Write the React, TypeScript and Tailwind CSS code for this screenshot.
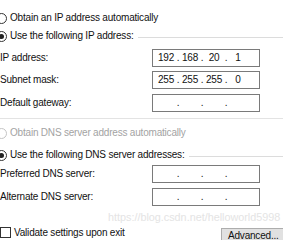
import { Fragment } from "react";

function Radio({ checked, disabled }: { checked?: boolean; disabled?: boolean }) {
  return (
    <span
      className={`-ml-[4px] flex h-[11px] w-[11px] shrink-0 items-center justify-center rounded-full border bg-white ${
        disabled ? "border-[#c4c4c4]" : "border-[#333333]"
      }`}
    >
      {checked && <span className="h-[5px] w-[5px] rounded-full bg-[#222222]" />}
    </span>
  );
}

function RadioRow({
  label,
  checked,
  disabled,
  group,
}: {
  label: string;
  checked?: boolean;
  disabled?: boolean;
  group?: boolean;
}) {
  return (
    <div className="flex h-[18px] items-center">
      <Radio checked={checked} disabled={disabled} />
      <span className={`ml-[3px] whitespace-nowrap ${disabled ? "text-[#a3a3a3]" : "text-[#111111]"}`}>
        {label}
      </span>
      {group && <span className="ml-[4px] mt-[2px] h-px flex-1 bg-[#dcdcdc]" />}
    </div>
  );
}

function IpBox({ parts }: { parts?: string[] }) {
  return (
    <div className="flex h-[18px] w-[108px] items-center border border-[#7a7a7a] bg-white pl-[4px]">
      {[0, 1, 2, 3].map((i) => (
        <Fragment key={i}>
          <span className="w-[18px] text-center">{parts?.[i] ?? ""}</span>
          {i < 3 && <span className="w-[6px] text-center">.</span>}
        </Fragment>
      ))}
    </div>
  );
}

function Field({ label, parts, className = "" }: { label: string; parts?: string[]; className?: string }) {
  return (
    <div className={`flex h-[18px] items-center ${className}`}>
      <span className="w-[152px] whitespace-nowrap">{label}</span>
      <IpBox parts={parts} />
    </div>
  );
}

export default function App() {
  return (
    <div className="relative h-[240px] w-[283px] overflow-hidden bg-white font-['Liberation_Sans',sans-serif] text-[10px] leading-none tracking-[-0.2px] text-[#111111]">
      <div className="flex flex-col pt-[9px]">
        <RadioRow label="Obtain an IP address automatically" />
        <RadioRow label="Use the following IP address:" checked group />

        <Field className="mt-[4px]" label="IP address:" parts={["192", "168", "20", "1"]} />
        <Field className="mt-[4px]" label="Subnet mask:" parts={["255", "255", "255", "0"]} />
        <Field className="mt-[5px]" label="Default gateway:" />

        <div className="mt-[6px] h-px w-full bg-[#e3e3e3]" />

        <div className="mt-[5px]">
          <RadioRow label="Obtain DNS server address automatically" disabled />
        </div>
        <div className="mt-[4px]">
          <RadioRow label="Use the following DNS server addresses:" checked group />
        </div>

        <Field className="mt-[1px]" label="Preferred DNS server:" />
        <Field className="mt-[5px]" label="Alternate DNS server:" />

        <div className="mt-[20px] flex items-start">
          <span className="mt-[1px] h-[11px] w-[11px] shrink-0 border border-[#333333] bg-white" />
          <span className="ml-[3px] mt-[2px] whitespace-nowrap">Validate settings upon exit</span>
          <div className="ml-auto mr-[-4px] mt-[2px] h-[20px] w-[66px] border border-[#adadad] bg-[#e1e1e1] pl-[6px] pt-[2px]">
            Advanced...
          </div>
        </div>
      </div>

      <span className="pointer-events-none absolute left-[108px] top-[212px] whitespace-nowrap font-['Liberation_Sans',sans-serif] text-[10.8px] tracking-normal text-[#e4e4e4]">
        https://blog.csdn.net/helloworld5998
      </span>
    </div>
  );
}
